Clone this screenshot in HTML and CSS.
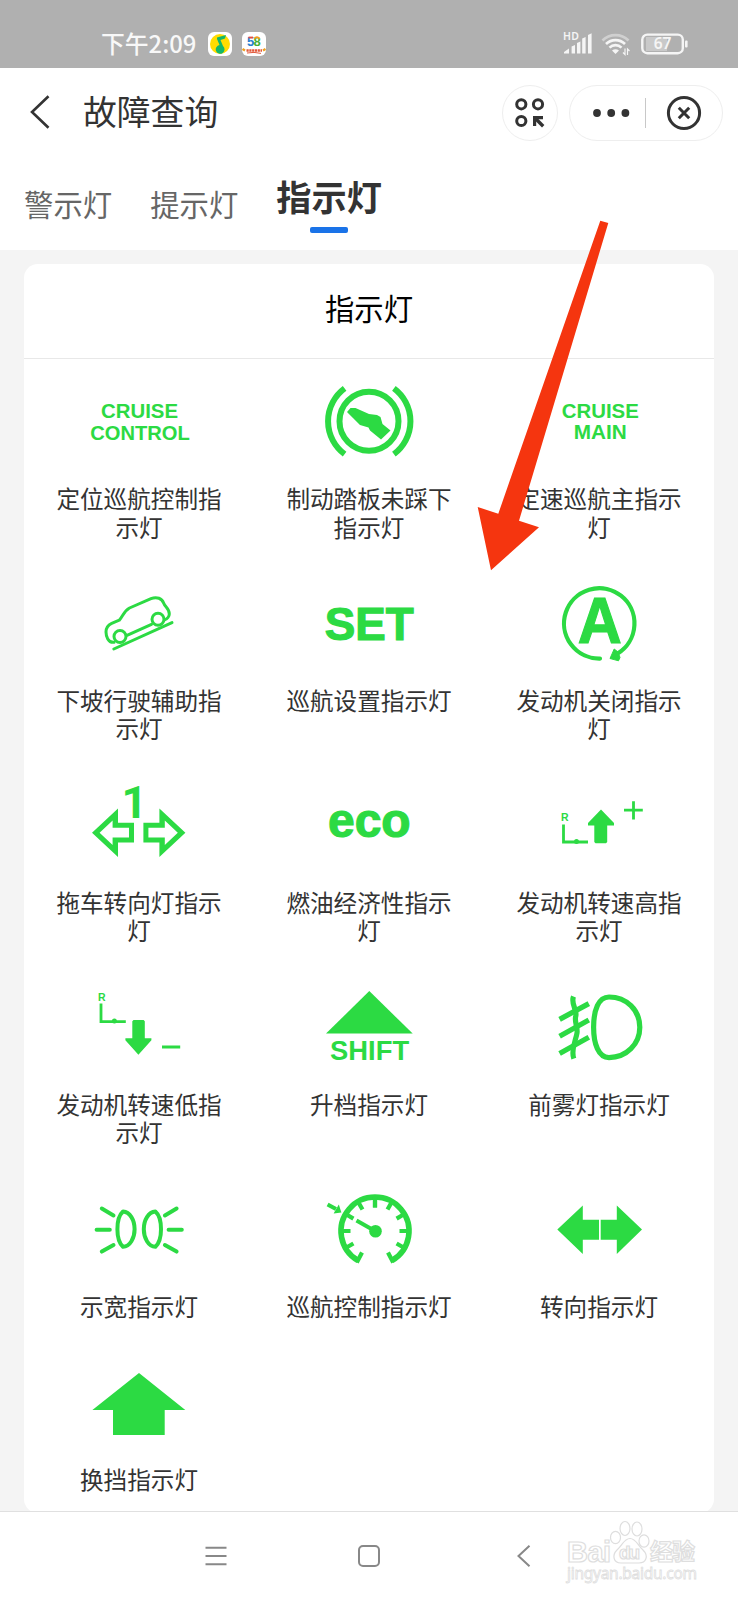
FILE: index.html
```html
<!DOCTYPE html>
<html lang="zh-CN">
<head>
  <meta charset="UTF-8" />
  <meta name="viewport" content="width=device-width, initial-scale=1.0" />
  <title>故障查询</title>
  <link rel="stylesheet" href="styles.css">
</head>
<body>
  <div class="status-bar">
    <span class="time">下午2:09</span>
    <svg class="app-icon" viewBox="0 0 24 24">
      <rect width="24" height="24" rx="6" fill="#fff"/>
      <circle cx="12" cy="12" r="10" fill="#ffdc00"/>
      <path d="M9 5.5 L18 3 L17 6.5 L12.5 8 L15 14 A4.4 4.4 0 1 1 11.5 13 L9 7 Z" fill="#12b76a"/>
    </svg>
    <svg class="app-icon app-58" viewBox="0 0 24 24">
      <rect width="24" height="24" rx="6" fill="#fff"/>
      <g font-family="Liberation Sans" font-weight="bold" font-size="13">
        <text x="5" y="14" fill="#2b7fd0">5</text>
        <text x="11.5" y="14" fill="#45b035">8</text>
      </g>
      <path d="M6.5 5.5 H11" stroke="#e84c3d" stroke-width="1.8"/>
      <path d="M12.5 7 a2.6 2.6 0 0 1 5 0" fill="none" stroke="#f39a1e" stroke-width="1.8"/>
      <path d="M.5 17 L3 18.5 M23.5 17 L21 18.5" stroke="#f0a020" stroke-width="2.4"/>
      <path d="M4.5 18.5 H20" stroke="#e2583a" stroke-width="2.6" stroke-dasharray="2.2 .6"/>
      <path d="M5 21 Q12 19.6 19 21.4" fill="none" stroke="#e2583a" stroke-width="1"/>
    </svg>
    <span class="spacer"></span>
    <svg class="signal" viewBox="0 0 30 24">
      <text x="0" y="8.3" font-family="Noto Sans" font-weight="600" font-size="10.5" textLength="16">HD</text>
      <path d="M1 21.5 V20 L6 16.5 V21.5 Z M8.6 14.5 L12 13 V21.5 H8.6 Z M14 11 L17.4 9.5 V21.5 H14 Z M19.2 6.5 L22.6 5 V21.5 H19.2 Z M25 3 L28.6 1.2 V21.5 H25 Z"/>
    </svg>
    <svg class="wifi" viewBox="0 0 30 24">
      <g fill="none" stroke-width="2.6">
        <path d="M1.5 8.5 A18.5 18.5 0 0 1 27.5 8.5" stroke="#d0d0d0"/>
        <path d="M5 12 A13.5 13.5 0 0 1 24 12" stroke="#f5f5f5"/>
        <path d="M8.5 15.6 A8.5 8.5 0 0 1 20.5 15.6" stroke="#f5f5f5"/>
      </g>
      <path d="M11 18.5 Q14.5 15.8 18 18.5 L14.5 22 Z"/>
      <path d="M24 16.5 V22.5 L22 20.5 M26.5 23 V17 L28.5 19" fill="none" stroke="#f5f5f5" stroke-width="1.2"/>
    </svg>
    <svg class="battery" viewBox="0 0 47 22">
      <rect x="5" y="4" width="21" height="14" fill="#c9c9c9"/>
      <rect x="1.3" y="1.6" width="40.5" height="18.6" rx="5" fill="none" stroke="#f5f5f5" stroke-width="2.4"/>
      <rect x="44" y="7.5" width="2.6" height="7" rx="1"/>
      <text x="21.5" y="16.4" font-family="Noto Sans" font-weight="600" font-size="15.5" text-anchor="middle">67</text>
    </svg>
  </div>

  <header>
    <svg class="back" viewBox="0 0 22 34"><path d="M19.5 1.2 L3 17 L19.5 32.8"/></svg>
    <h1>故障查询</h1>
    <div class="round-btn">
      <svg viewBox="0 0 30 30" width="30" height="30">
        <g fill="none" stroke="#333" stroke-width="3">
          <circle cx="6.3" cy="6.3" r="4.6"/>
          <circle cx="23" cy="6.3" r="4.6"/>
          <circle cx="6.3" cy="23" r="4.6"/>
          <path d="M20 20 L28.2 28.2" stroke-width="3.4"/>
        </g>
        <path d="M18 18 H28 V21.2 H21.2 V28 H18 Z" fill="#333"/>
      </svg>
    </div>
    <div class="capsule">
      <svg class="dots" viewBox="0 0 38 10"><circle cx="5" cy="5" r="3.9"/><circle cx="19.2" cy="5" r="3.9"/><circle cx="33.4" cy="5" r="3.9"/></svg>
      <span class="divider"></span>
      <svg class="close" viewBox="0 0 36 36"><circle cx="18" cy="18" r="15.6"/><path d="M12.8 12.8 L23.2 23.2 M23.2 12.8 L12.8 23.2"/></svg>
    </div>
  </header>

  <nav class="tabs">
    <span class="tab">警示灯</span>
    <span class="tab">提示灯</span>
    <span class="tab active">指示灯</span>
  </nav>

  <main>
    <section class="card">
      <h2>指示灯</h2>
      <div class="grid">
        <div class="item">
          <svg viewBox="0 0 100 100">
            <text x="50.5" y="46" font-size="21" textLength="77" lengthAdjust="spacingAndGlyphs">CRUISE</text>
            <text x="51" y="67.6" font-size="21" textLength="99.6" lengthAdjust="spacingAndGlyphs">CONTROL</text>
          </svg>
          <p>定位巡航控制指示灯</p>
        </div>
        <div class="item">
          <svg viewBox="0 0 100 100">
            <g class="line" stroke-width="6">
              <circle cx="50" cy="49.3" r="29.5"/>
              <path d="M25.6 16.4 A41 41 0 0 0 25.6 82.2 M74.9 16.4 A41 41 0 0 1 74.9 82.2"/>
            </g>
            <path d="M28 40 L31.5 36 L36.5 36 L50 42 L58 43 L61.5 45 L63.5 52 L71.5 58.5 L62 67.5 L51 58.5 L49.5 55.5 L41 53 L34.5 46.5 Z"/>
          </svg>
          <p>制动踏板未踩下指示灯</p>
        </div>
        <div class="item">
          <svg viewBox="0 0 100 100">
            <text x="51.3" y="45.8" font-size="21" textLength="77" lengthAdjust="spacingAndGlyphs">CRUISE</text>
            <text x="51.3" y="66.8" font-size="21" textLength="53" lengthAdjust="spacingAndGlyphs">MAIN</text>
          </svg>
          <p>定速巡航主指示灯</p>
        </div>

        <div class="item">
          <svg viewBox="0 0 100 100">
            <g class="line" stroke-width="3" stroke-linecap="round" stroke-linejoin="round">
              <path d="M25 68.3 C19 69 17 62 17 58 C17 53 19 51 22.7 49.3 L30.3 46.2 C34 42 35 37 40.5 34 L62 24.6 C68 22.3 73 24.5 74.6 29 C76 33 80.5 34.5 80.3 40 C80.2 42.5 79 44.5 75.5 45.8"/>
              <circle cx="31" cy="62.5" r="6"/>
              <circle cx="69" cy="45.3" r="6"/>
              <path d="M38 61.3 L62.5 50.3 M24.8 75 L83 48.6"/>
            </g>
          </svg>
          <p>下坡行驶辅助指示灯</p>
        </div>
        <div class="item">
          <svg viewBox="0 0 100 100"><text class="heavy" x="50.3" y="66.2" font-size="47" textLength="89" lengthAdjust="spacingAndGlyphs">SET</text></svg>
          <p>巡航设置指示灯</p>
        </div>
        <div class="item">
          <svg viewBox="0 0 100 100">
            <path class="line" stroke-width="4.2" stroke-linecap="round" d="M51 84.6 A35.2 35.2 0 1 1 69 79.2"/>
            <path d="M61 84.5 L65.2 75 L69 78 L71 83.5 L69.5 86.8 Z" stroke="#2cda43" stroke-linejoin="round"/>
            <text class="heavy" x="50.8" y="69" font-size="64" textLength="44" lengthAdjust="spacingAndGlyphs">A</text>
          </svg>
          <p>发动机关闭指示灯</p>
        </div>

        <div class="item">
          <svg viewBox="0 0 100 100">
            <text class="digit" x="45.5" y="42.4" font-size="45">1</text>
            <path id="hollow" fill-rule="evenodd" d="M3 56.7 L29 32.4 V46.7 H45 V66.4 H29 V81 Z M10.6 56.7 L23.6 69 V61.4 H40 V51.8 H23.6 V44.4 Z"/>
            <use href="#hollow" transform="matrix(-1 0 0 1 99.4 0)"/>
          </svg>
          <p>拖车转向灯指示灯</p>
        </div>
        <div class="item">
          <svg viewBox="0 0 100 100"><text class="heavy" x="50.3" y="61" font-size="48">eco</text></svg>
          <p>燃油经济性指示灯</p>
        </div>
        <div class="item">
          <svg viewBox="0 0 100 100">
            <text x="15.8" y="45" font-size="10.5">R</text>
            <path class="line" stroke-width="2.8" d="M14.5 48.4 V66 H39 M75 34.2 H93.8 M84.5 25.2 V43.6"/>
            <circle cx="27.5" cy="65.5" r="2.5"/>
            <path d="M52 33.4 L65 47 V49.5 H58.2 V66 L57 67.2 H46.5 L45.3 66 V49.5 H39 V47 Z"/>
          </svg>
          <p>发动机转速高指示灯</p>
        </div>

        <div class="item">
          <svg viewBox="0 0 100 100">
            <text x="12.8" y="23.8" font-size="10.5">R</text>
            <path class="line" stroke-width="2.8" d="M12 26.6 V44.6 H36.8 M73 70 H91.2"/>
            <circle cx="25.4" cy="44" r="2.5"/>
            <path d="M44.5 43 H54.6 L55.8 44.2 V61.2 H62.4 V63.2 L49.4 77.7 L36.4 63.2 V61.2 H43.3 V44.2 Z"/>
          </svg>
          <p>发动机转速低指示灯</p>
        </div>
        <div class="item">
          <svg viewBox="0 0 100 100">
            <path d="M50.3 14 L93.7 56.6 H7 Z"/>
            <text x="50.6" y="83" font-size="28.4" textLength="79" lengthAdjust="spacingAndGlyphs">SHIFT</text>
          </svg>
          <p>升档指示灯</p>
        </div>
        <div class="item">
          <svg viewBox="0 0 100 100">
            <g class="line" stroke-width="5.2">
              <path d="M60 20 C49.5 20 44.6 33 44.6 50.3 C44.6 67 49.5 80.6 60 80.6 C77.5 80.6 90.8 67 90.8 50.3 C90.8 33 77.5 20 60 20 Z"/>
              <path d="M10.6 42.4 L39.8 26.6 M10.6 59.2 L39.8 43 M10.6 76.4 L39.8 60.2"/>
              <path d="M24.5 19.6 C21.5 27 28.5 33 26.8 39 C25 45 29 50 28 56 C27 63 21.5 73 24.8 81.6"/>
            </g>
          </svg>
          <p>前雾灯指示灯</p>
        </div>

        <div class="item">
          <svg viewBox="0 0 100 100">
            <g id="lamp" class="line" stroke-width="4" stroke-linecap="round" stroke-linejoin="round">
              <path d="M34 32.5 C41 33 45.6 41 45.6 50.2 C45.6 59 41 67.5 34 67.8 C30 64 28.4 57 28.4 50.2 C28.4 43 30 36 34 32.5 Z"/>
              <path d="M12.8 29.6 L24.5 36.4 M7.6 50.8 H20.8 M12.8 72.6 L24.5 66"/>
            </g>
            <use href="#lamp" transform="matrix(-1 0 0 1 100.4 0)"/>
          </svg>
          <p>示宽指示灯</p>
        </div>
        <div class="item">
          <svg viewBox="0 0 100 100">
            <g class="line" stroke-width="5.6">
              <path d="M39 81.5 A34 34 0 1 1 73 81.5"/>
              <path id="ticks" stroke-width="4.2" d="M56 18 V28.5 M73 22.6 L68.5 30.5 M85.4 35 L77.6 39.6 M90 52 H80.5 M85.4 69 L77.6 64.5 M74.2 83.5 L69 73.5"/>
              <use href="#ticks" transform="matrix(-1 0 0 1 112 0)"/>
              <path stroke-width="4" d="M56 52 L37.5 41.5 M8.6 25.4 L17 30"/>
            </g>
            <circle cx="56.5" cy="52.3" r="6.3"/>
            <path d="M19.8 25.6 L22.4 33.4 L14.6 34.6 Z"/>
          </svg>
          <p>巡航控制指示灯</p>
        </div>
        <div class="item">
          <svg viewBox="0 0 100 100">
            <path d="M8.3 50.6 L33.8 26.5 V40.8 H50 V60.8 H33.8 V75 Z M51.7 40.8 H67.8 V26.5 L93 50.6 L67.8 75 V60.8 H51.7 Z"/>
          </svg>
          <p>转向指示灯</p>
        </div>

        <div class="item">
          <svg viewBox="0 0 100 100"><path d="M50 20 L96.3 57 H75.7 V82 H24 V57 H3.4 Z"/></svg>
          <p>换挡指示灯</p>
        </div>
      </div>
    </section>
  </main>

  <footer>
    <svg viewBox="0 0 22 22"><path d="M.5 2.8 H21.5 M.5 11 H21.5 M.5 19.2 H21.5"/></svg>
    <svg viewBox="0 0 22 22"><rect x="1" y="1" width="20" height="20" rx="4"/></svg>
    <svg viewBox="0 0 22 22"><path d="M18.5 .8 L7.5 11 L18.5 21.2"/></svg>
  </footer>

  <svg class="watermark" viewBox="0 0 140 66">
    <text x="3" y="41.5" font-family="Liberation Sans" font-weight="bold" font-size="29" textLength="44">Bai</text>
    <ellipse cx="51.5" cy="17.5" rx="5" ry="6.2"/>
    <ellipse cx="61" cy="8.5" rx="5" ry="7"/>
    <ellipse cx="73" cy="9" rx="5" ry="7"/>
    <ellipse cx="80" cy="21" rx="5" ry="6.2"/>
    <path d="M66 18.5 C72 18.5 74 26 79 30 C85 36 82 43 75 43 H57 C49 43 48 35 53 30 C58 26 60 18.5 66 18.5 Z"/>
    <text x="55" y="39" font-family="Liberation Sans" font-weight="bold" font-size="19" textLength="21">du</text>
    <text x="86" y="40" font-family="Noto Sans CJK SC" font-weight="bold" font-size="23" textLength="45">经验</text>
    <text x="3" y="59" font-family="Noto Sans" font-size="15.5" textLength="130" stroke-width=".8">jingyan.baidu.com</text>
  </svg>

  <svg class="arrow" viewBox="0 0 64 352">
    <path d="M123.3 1.7 L131.3 4 L42 301.7 L62 308.3 L14 351.3 L.7 288 L21.3 294.7 Z"/>
  </svg>
</body>
</html>
```

FILE: styles.css
```css
:root {
  --green: #2cda43;
  --text: #333333;
  --bg: #f4f4f4;
}

* {
  margin: 0;
  padding: 0;
  box-sizing: border-box;
}

body {
  position: relative;
  width: 738px;
  height: 1600px;
  overflow: hidden;
  display: flex;
  flex-direction: column;
  background: #fff;
  color: var(--text);
  font-family: "Noto Sans CJK SC", sans-serif;
}

svg {
  display: block;
  flex: none;
}

/* Status bar */
.status-bar {
  height: 68px;
  padding: 20px 50px 0 101px;
  display: flex;
  align-items: center;
  background: #b0b0b0;
  color: #f8f8f8;
  fill: #f5f5f5;
}

.time {
  width: 107px;
  margin-bottom: 3px;
  font-size: 23.8px;
  font-weight: 500;
  line-height: 24px;
  white-space: nowrap;
}

.app-icon {
  width: 24px;
  height: 24px;
}

.app-58 {
  margin-left: 10px;
}

.spacer {
  flex: 1;
}

.signal {
  width: 30px;
  height: 24px;
  overflow: visible;
}

.wifi {
  width: 30px;
  height: 24px;
  margin-left: 8px;
}

.battery {
  width: 47px;
  height: 22px;
  margin-left: 10px;
}

/* Header */
header {
  height: 88px;
  padding: 2px 15px 0 29px;
  display: flex;
  align-items: center;
}

.back {
  width: 22px;
  height: 34px;
  margin-bottom: 2px;
  fill: none;
  stroke: var(--text);
  stroke-width: 2.6;
}

h1 {
  flex: 1;
  margin: 0 0 4px 32px;
  font-size: 33.8px;
  font-weight: 400;
  line-height: 44px;
}

.round-btn {
  width: 56px;
  height: 56px;
  border: 1px solid #eeeeee;
  border-radius: 50%;
  display: flex;
  align-items: center;
  justify-content: center;
}

.capsule {
  width: 154px;
  height: 56px;
  margin-left: 11px;
  padding: 0 20px 0 22px;
  border: 1px solid #eeeeee;
  border-radius: 28px;
  display: flex;
  align-items: center;
  justify-content: space-between;
}

.dots {
  width: 38px;
  height: 10px;
  fill: var(--text);
}

.divider {
  width: 1px;
  height: 30px;
  background: #c8c8c8;
}

.close {
  width: 36px;
  height: 36px;
  margin-left: 5px;
  fill: none;
  stroke: var(--text);
  stroke-width: 3;
}

/* Tabs */
.tabs {
  height: 94px;
  padding: 16px 24px 0;
  display: flex;
  gap: 38px;
}

.tab {
  padding-top: 9px;
  font-size: 29.4px;
  line-height: 44px;
  color: #666;
}

.tab.active {
  display: flex;
  flex-direction: column;
  align-items: center;
  padding-top: 2px;
  font-size: 35.2px;
  font-weight: 700;
  color: var(--text);
}

.tab.active::after {
  content: "";
  width: 38px;
  height: 6px;
  margin-top: 9px;
  border-radius: 2px;
  background: #1a73e8;
}

/* Card */
main {
  height: 1261px;
  padding: 14px 24px 0;
  background: var(--bg);
}

.card {
  height: 1249px;
  border-radius: 14px;
  background: #fff;
}

h2 {
  height: 95px;
  border-bottom: 1px solid #e8e8e8;
  font-size: 29.4px;
  font-weight: 400;
  line-height: 86px;
  text-align: center;
  color: #000;
}

.grid {
  display: grid;
  grid-template-columns: repeat(3, 230px);
}

.item {
  padding: 13px 30px 20px;
  display: flex;
  flex-direction: column;
  align-items: center;
}

.item svg {
  width: 100px;
  height: 100px;
  margin-left: -1px;
  overflow: visible;
  fill: var(--green);
}

.item text {
  font-family: "Liberation Sans", Arial, sans-serif;
  font-weight: 700;
  text-anchor: middle;
}

.item .heavy {
  stroke: var(--green);
  stroke-width: 1.2;
}

.item .digit {
  font-family: Roboto, sans-serif;
}

.item .line {
  fill: none;
  stroke: var(--green);
}

.item p {
  margin-top: 12.4px;
  font-size: 23.6px;
  line-height: 28.2px;
  text-align: center;
}

/* Bottom system navigation */
footer {
  flex: 1;
  padding: 0 205px;
  border-top: 1px solid #e0e0e0;
  display: flex;
  align-items: center;
  justify-content: space-between;
  background: #fff;
}

footer svg {
  width: 22px;
  height: 22px;
  fill: none;
  stroke: #888;
  stroke-width: 2;
}

/* Overlays */
.watermark {
  position: absolute;
  left: 564px;
  top: 1520px;
  width: 140px;
  height: 66px;
  fill: #fff;
  stroke: #dedede;
  stroke-width: 1.2;
}

.arrow {
  position: absolute;
  left: 477px;
  top: 219px;
  width: 64px;
  height: 352px;
  overflow: visible;
  fill: #f5350f;
}
```
